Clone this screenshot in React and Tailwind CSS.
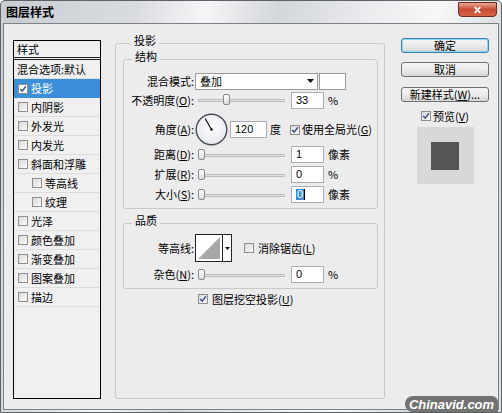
import React from 'react';
import clsx from 'clsx';

const FONT = "font-['Noto_Sans_CJK_SC','Liberation_Sans',sans-serif]";
const NUM = "font-['Liberation_Sans','Noto_Sans_CJK_SC',sans-serif]";

function Check({ checked, className }) {
  return (
    <span
      className={clsx(
        'inline-flex w-[10px] h-[10px] shrink-0 items-center justify-center border border-[#8f8f8f] bg-gradient-to-br from-[#d9d9d9] to-[#fbfbfb]',
        className
      )}
    >
      {checked && (
        <svg viewBox="0 0 10 10" className="w-[8px] h-[8px]">
          <path d="M1.5 5 L4 7.6 L8.6 1.6" fill="none" stroke="#3b4f8a" strokeWidth="1.8" />
        </svg>
      )}
    </span>
  );
}

function Slider({ thumb }) {
  return (
    <div className="relative w-[87px] h-[12px] shrink-0">
      <div className="absolute left-0 right-0 top-[5px] h-[3px] border border-[#b9b9b9] bg-[#e4e4e4] rounded-[1px]" />
      <div
        className={clsx(
          'absolute top-0 w-[7px] h-[11px] border border-[#8a8a8a] rounded-[2px] bg-gradient-to-b from-white to-[#dcdcdc]',
          thumb
        )}
      />
    </div>
  );
}

function NumBox({ children, w = 'w-[33px]' }) {
  return (
    <div
      className={clsx(
        'h-[17px] shrink-0 border border-[#abadb3] bg-white flex items-center pl-[4px] text-[11px] leading-none',
        NUM,
        w
      )}
    >
      {children}
    </div>
  );
}

function Label({ children }) {
  return <div className="w-[70px] shrink-0 text-right text-[11px] leading-none">{children}</div>;
}

function SliderRow({ label, thumb, value, unit, className }) {
  return (
    <div className={clsx('flex items-center', className)}>
      <Label>{label}</Label>
      <div className="ml-[4px]">
        <Slider thumb={thumb} />
      </div>
      <div className="ml-[6px]">
        <NumBox>{value}</NumBox>
      </div>
      <span className="ml-[4px] text-[11px] leading-none">{unit}</span>
    </div>
  );
}

// group box: the border line sits a little below the title's middle
function Group({ title, children, className }) {
  return (
    <fieldset className={clsx('border border-[#c9c9c9] rounded-[3px]', className)}>
      <legend className="ml-[8px] px-[3px] h-[16px] text-[11px] leading-[10px]">{title}</legend>
      {children}
    </fieldset>
  );
}

const items = [
  { t: '内阴影' },
  { t: '外发光' },
  { t: '内发光' },
  { t: '斜面和浮雕' },
  { t: '等高线', sub: true },
  { t: '纹理', sub: true },
  { t: '光泽' },
  { t: '颜色叠加' },
  { t: '渐变叠加' },
  { t: '图案叠加' },
  { t: '描边' },
];

function Btn({ children, primary, className }) {
  return (
    <div
      className={clsx(
        'h-[15px] flex items-center justify-center rounded-[3px] border text-[11px] leading-none bg-gradient-to-b from-[#f4f4f4] via-[#ebebeb] to-[#d6d6d6]',
        primary ? 'border-[#3c7fb1] shadow-[inset_0_0_0_1px_#8ad8f4]' : 'border-[#707070]',
        className
      )}
    >
      {children}
    </div>
  );
}

export default function App() {
  return (
    <div
      className={clsx(
        'relative w-[502px] h-[413px] flex flex-col border border-[#5d6266] rounded-t-[5px] overflow-hidden text-black',
        'bg-[linear-gradient(105deg,#c9cdd1_0%,#d9dcdf_22%,#f4f5f6_34%,#d3d7da_46%,#e9ebed_60%,#f7f7f7_72%,#d4d8db_86%,#dfe2e4_100%)]',
        FONT
      )}
    >
      {/* title bar */}
      <div className="h-[22px] shrink-0 flex items-start justify-between pl-[5px] pr-[4px]">
        <span className="mt-[5px] text-[12px] font-bold leading-none">图层样式</span>
        <div className="mt-[1px] w-[39px] h-[15px] rounded-b-[4px] border border-[#6e2b20] bg-gradient-to-b from-[#e9a694] via-[#c94a33] to-[#d8634a] flex items-center justify-center">
          <svg viewBox="0 0 10 10" className="w-[9px] h-[8px]">
            <path d="M1.5 1.5 L8.5 8.5 M8.5 1.5 L1.5 8.5" stroke="white" strokeWidth="2.2" />
          </svg>
        </div>
      </div>

      {/* content */}
      <div className="flex-1 mx-[2px] mb-[2px] border border-[#7d8084] bg-[#ececec] flex items-start pt-[11px] pl-[9px]">
        {/* style list */}
        <div className="mt-[5px] w-[88px] h-[359px] shrink-0 border border-black bg-[#f0f0f0] text-[11px] leading-none">
          <div className="h-[19px] border-b-[3px] border-double border-[#222] flex items-center pl-[3px]">样式</div>
          <div className="h-[19px] border-b border-[#dedede] flex items-center pl-[3px]">混合选项:默认</div>
          <div className="h-[19px] bg-[#3a8fd8] text-white flex items-center pl-[4px]">
            <Check checked className="bg-white from-white to-white" />
            <span className="ml-[3px]">投影</span>
          </div>
          {items.map((it) => (
            <div
              key={it.t}
              className={clsx(
                'h-[19px] border-b border-[#dedede] flex items-center',
                it.sub ? 'pl-[18px]' : 'pl-[4px]'
              )}
            >
              <Check />
              <span className="ml-[3px]">{it.t}</span>
            </div>
          ))}
        </div>

        {/* drop shadow group */}
        <Group title="投影" className="ml-[14px] w-[270px] h-[364px] shrink-0 pl-[7px] pr-[6px]">
          <Group title="结构" className="pb-[5px]">
            <div className="mt-[5px] h-[18px] flex items-center">
              <Label>混合模式:</Label>
              <div className="ml-[1px] w-[123px] h-[17px] border border-[#9a9a9a] bg-white flex items-center justify-between pl-[4px] pr-[3px] text-[11px] leading-none">
                <span>叠加</span>
                <svg viewBox="0 0 7 4" className="w-[7px] h-[4px]">
                  <path d="M0 0 H7 L3.5 4 Z" fill="#111" />
                </svg>
              </div>
              <div className="ml-[1px] w-[27px] h-[17px] border border-[#9a9a9a] bg-white" />
            </div>

            <SliderRow
              className="mt-[1px] h-[18px]"
              label={<>不透明度(<u>O</u>):</>}
              thumb="left-[25px]"
              value="33"
              unit="%"
            />

            <div className="mt-[4px] h-[33px] flex items-center">
              <Label>角度(<u>A</u>):</Label>
              <svg viewBox="0 0 33 33" className="ml-[1px] w-[33px] h-[33px] shrink-0">
                <defs>
                  <radialGradient id="dial" cx="50%" cy="40%" r="60%">
                    <stop offset="0%" stopColor="#ffffff" />
                    <stop offset="100%" stopColor="#e6e8ec" />
                  </radialGradient>
                </defs>
                <circle cx="16.5" cy="16.5" r="15.3" fill="url(#dial)" stroke="#4a4d55" strokeWidth="1.4" />
                <path d="M16.5 16.5 L10.2 5.6" stroke="#222" strokeWidth="1.3" />
                <circle cx="16.5" cy="16.5" r="1.3" fill="#111" />
              </svg>
              <div className="ml-[2px]">
                <NumBox w="w-[37px]">120</NumBox>
              </div>
              <span className="ml-[3px] text-[11px] leading-none">度</span>
              <Check checked className="ml-[9px]" />
              <span className="ml-[2px] text-[11px] leading-none">使用全局光(<u>G</u>)</span>
            </div>

            <SliderRow className="h-[17px]" label={<>距离(<u>D</u>):</>} thumb="left-0" value="1" unit="像素" />
            <SliderRow className="mt-[3px] h-[17px]" label={<>扩展(<u>R</u>):</>} thumb="left-0" value="0" unit="%" />
            <SliderRow
              className="mt-[3px] h-[17px]"
              label={<>大小(<u>S</u>):</>}
              thumb="left-0"
              value={<span className="bg-[#3a8fd8] text-white px-[1px] border-r border-black">0</span>}
              unit="像素"
            />
          </Group>

          <Group title="品质" className="mt-[6px] pb-[5px]">
            <div className="mt-[3px] h-[28px] flex items-center">
              <Label>等高线:</Label>
              <div className="ml-[1px] flex h-[28px] border border-[#222] bg-white">
                <svg viewBox="0 0 26 26" className="w-[26px] h-[26px]">
                  <rect x="0" y="0" width="26" height="26" fill="#fff" />
                  <path d="M2 24 L24 2 L24 24 Z" fill="#a8a8a8" />
                </svg>
                <div className="w-[9px] border-l border-[#222] flex items-center justify-center">
                  <svg viewBox="0 0 5 3" className="w-[5px] h-[3px]">
                    <path d="M0 0 H5 L2.5 3 Z" fill="#111" />
                  </svg>
                </div>
              </div>
              <Check className="ml-[12px]" />
              <span className="ml-[4px] text-[11px] leading-none">消除锯齿(<u>L</u>)</span>
            </div>
            <SliderRow className="mt-[4px] h-[17px]" label={<>杂色(<u>N</u>):</>} thumb="left-0" value="0" unit="%" />
          </Group>

          <div className="mt-[4px] h-[12px] flex items-center pl-[75px]">
            <Check checked />
            <span className="ml-[4px] text-[11px] leading-none">图层挖空投影(<u>U</u>)</span>
          </div>
        </Group>

        {/* buttons */}
        <div className="ml-[16px] w-[88px] shrink-0 flex flex-col">
          <Btn primary className="mt-[3px]">确定</Btn>
          <Btn className="mt-[9px]">取消</Btn>
          <Btn className="mt-[10px]">新建样式(<u>W</u>)...</Btn>
          <div className="mt-[8px] h-[12px] flex items-center justify-center">
            <Check checked />
            <span className="ml-[2px] text-[11px] leading-none">预览(<u>V</u>)</span>
          </div>
          <div className="mt-[5px] self-center w-[57px] h-[57px] bg-[#d8d8d8] flex items-center justify-center">
            <div className="w-[28px] h-[28px] bg-[#555555]" />
          </div>
        </div>
      </div>

      {/* watermark */}
      <div className="absolute right-[3px] bottom-0 w-[93px] h-[16px] rounded-l-[8px] rounded-tr-[6px] bg-[#737373] flex items-center justify-center">
        <span className="text-white text-[13px] font-bold italic leading-none font-['Liberation_Sans',sans-serif]">
          Chinavid.com
        </span>
      </div>
    </div>
  );
}
